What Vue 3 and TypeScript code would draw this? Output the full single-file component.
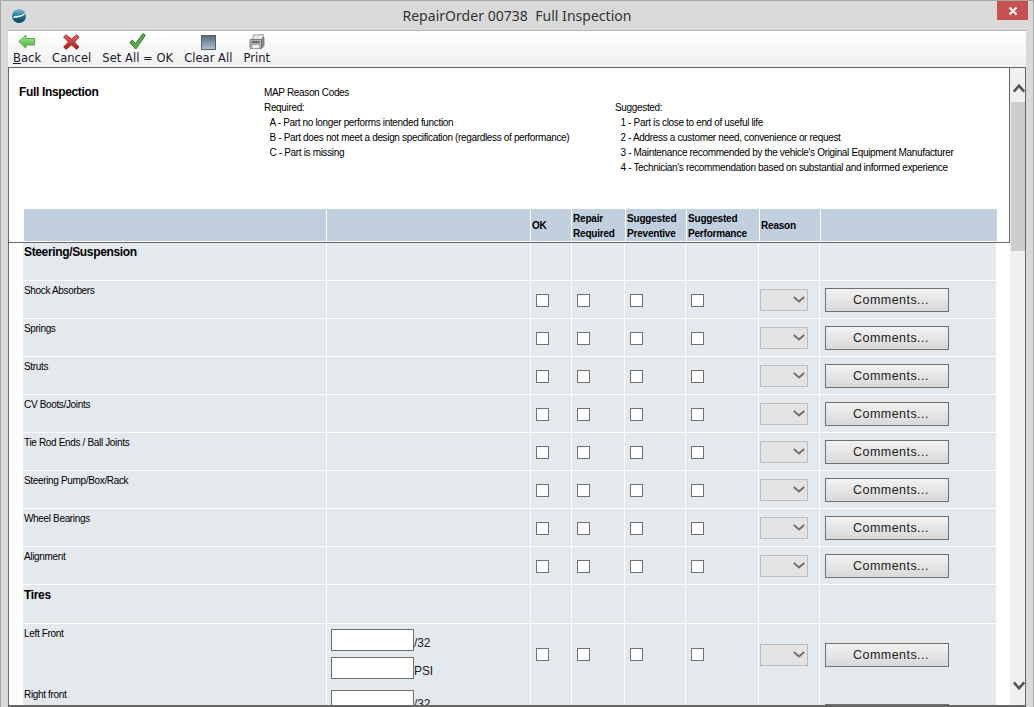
<script setup lang="ts">
interface Row { kind: 'section' | 'item' | 'tire'; label: string }

const tools = ['Cancel', 'Set All = OK', 'Clear All', 'Print']
const required = [
  'A - Part no longer performs intended function',
  'B - Part does not meet a design specification (regardless of performance)',
  'C - Part is missing',
]
const suggested = [
  '1 - Part is close to end of useful life',
  '2 - Address a customer need, convenience or request',
  "3 - Maintenance recommended by the vehicle's Original Equipment Manufacturer",
  "4 - Technician's recommendation based on substantial and informed experience",
]
const heads = [['OK'], ['Repair', 'Required'], ['Suggested', 'Preventive'], ['Suggested', 'Performance'], ['Reason']]
const rows: Row[] = [
  { kind: 'section', label: 'Steering/Suspension' },
  ...['Shock Absorbers', 'Springs', 'Struts', 'CV Boots/Joints', 'Tie Rod Ends / Ball Joints', 'Steering Pump/Box/Rack', 'Wheel Bearings', 'Alignment']
    .map((label): Row => ({ kind: 'item', label })),
  { kind: 'section', label: 'Tires' },
  { kind: 'tire', label: 'Left Front' },
  { kind: 'tire', label: 'Right front' },
]
</script>

<template>
  <div class="window">
    <header class="titlebar">
      <svg class="logo" width="16" height="16" viewBox="0 0 16 16">
        <defs>
          <linearGradient id="lg" x1="0" y1="0" x2="0" y2="1">
            <stop offset="0" stop-color="#7cc3d3" /><stop offset="0.55" stop-color="#1d6f86" /><stop offset="1" stop-color="#0d3f52" />
          </linearGradient>
        </defs>
        <circle cx="8" cy="8" r="7" fill="url(#lg)" />
        <path d="M1.5 9.5C4 6.8 9 9.2 14.6 4.8 13.5 8.2 8 10.4 1.5 9.5Z" fill="#fff" />
      </svg>
      <span class="title">RepairOrder 00738&nbsp; Full Inspection</span>
      <button class="close" aria-label="Close">
        <svg width="10" height="10" viewBox="0 0 10 10"><path d="M1.5 1.5 8.5 8.5M8.5 1.5 1.5 8.5" stroke="#fff" stroke-width="2" /></svg>
      </button>
    </header>

    <nav class="toolbar">
      <div class="tool">
        <svg width="18" height="16" viewBox="0 0 18 16">
          <defs><linearGradient id="ga" x1="0" y1="0" x2="0" y2="1"><stop offset="0" stop-color="#b4ec9c" /><stop offset="1" stop-color="#3fae3a" /></linearGradient></defs>
          <path d="M.8 7.5 8 1.2V4.5H16.6V11H8V14.2Z" fill="url(#ga)" stroke="#5aa84f" />
        </svg>
        <span class="tool-label"><u>B</u>ack</span>
      </div>
      <div v-for="(t, i) in tools" :key="t" class="tool">
        <svg v-if="i === 0" width="17" height="16" viewBox="0 0 17 16">
          <defs><linearGradient id="gx" x1="0" y1="0" x2="0" y2="1"><stop offset="0" stop-color="#e3605e" /><stop offset="1" stop-color="#a81e20" /></linearGradient></defs>
          <path d="M3 .7 8.5 5 13.6.7 16.2 3 11.5 8 16.2 13 13.6 15.4 8.5 11 3 15.4.6 13 5.4 8 .6 3Z" fill="url(#gx)" stroke="#8f2a2a" stroke-width=".8" />
        </svg>
        <svg v-else-if="i === 1" width="17" height="17" viewBox="0 0 17 17">
          <path d="M.8 9.5 3.4 7 6.4 10.6 14 .6 16.4 2.2 6.8 16Z" fill="#5cab46" stroke="#2f7a2d" />
        </svg>
        <svg v-else-if="i === 2" width="15" height="15" viewBox="0 0 15 15">
          <defs><linearGradient id="gs" x1="0" y1="0" x2="0" y2="1"><stop offset="0" stop-color="#5b6878" /><stop offset="1" stop-color="#a9c3d6" /></linearGradient></defs>
          <rect x=".5" y=".5" width="14" height="14" fill="url(#gs)" stroke="#55606c" />
        </svg>
        <svg v-else width="16" height="16" viewBox="0 0 16 16">
          <path d="M4.5 1 14.5.6 13.6 5.5H3.6Z" fill="#e6e6e6" stroke="#8a8a8a" stroke-width=".8" />
          <path d="M1 5.5H12.5V14.5H1Z" fill="#b4b4b4" stroke="#6e6e6e" stroke-width=".8" />
          <path d="M12.5 5.5 15 3V11.5L12.5 14.5Z" fill="#8a8a8a" stroke="#6e6e6e" stroke-width=".8" />
          <rect x="3" y="7.2" width="7.5" height="1.6" fill="#555" />
          <rect x="3" y="10.4" width="7.5" height="4.2" fill="#eee" stroke="#888" stroke-width=".6" />
        </svg>
        <span class="tool-label">{{ t }}</span>
      </div>
    </nav>

    <main class="content">
      <div class="page">
        <section class="fixed">
          <div class="intro">
            <h1 class="page-title">Full Inspection</h1>
            <div class="codes codes-a">
              <p>MAP Reason Codes</p>
              <p>Required:</p>
              <p v-for="r in required" :key="r" class="indent">{{ r }}</p>
            </div>
            <div class="codes codes-b">
              <p class="blank">&nbsp;</p>
              <p>Suggested:</p>
              <p v-for="s in suggested" :key="s" class="indent">{{ s }}</p>
            </div>
          </div>
          <div class="head">
            <div></div>
            <div></div>
            <div v-for="(h, i) in heads" :key="i" class="hcell">
              <span v-for="l in h" :key="l">{{ l }}</span>
            </div>
            <div></div>
          </div>
        </section>

        <section class="scroll">
          <div v-for="r in rows" :key="r.label" class="row" :class="'row-' + r.kind">
            <div class="cell-label">{{ r.label }}</div>
            <div class="cell-measure">
              <template v-if="r.kind === 'tire'">
                <label class="measure"><input type="text" /><span>/32</span></label>
                <label class="measure"><input type="text" /><span>PSI</span></label>
              </template>
            </div>
            <template v-if="r.kind !== 'section'">
              <div v-for="n in 4" :key="n" class="cell-check"><input type="checkbox" /></div>
              <div class="cell-reason">
                <div class="select">
                  <svg width="12" height="7" viewBox="0 0 12 7"><path d="M.8 1 6 5.4 11.2 1" fill="none" stroke="#707070" stroke-width="2" /></svg>
                </div>
              </div>
              <div class="cell-btn"><button class="comments">Comments...</button></div>
            </template>
            <template v-else>
              <div v-for="n in 6" :key="n"></div>
            </template>
          </div>
        </section>
      </div>

      <aside class="scrollbar">
        <div class="arrow arrow-up">
          <svg width="12" height="10" viewBox="0 0 12 10"><path d="M.8 8.5 6 2.8 11.2 8.5" fill="none" stroke="#555" stroke-width="2.6" /></svg>
        </div>
        <div class="thumb"></div>
        <div class="track"></div>
        <div class="arrow arrow-down">
          <svg width="12" height="10" viewBox="0 0 12 10"><path d="M.8 1.5 6 7.2 11.2 1.5" fill="none" stroke="#555" stroke-width="2.6" /></svg>
        </div>
      </aside>
    </main>
  </div>
</template>

<style>
html, body { margin: 0; overflow: hidden; }
</style>

<style scoped>
.window {
  width: 1034px;
  height: 707px;
  box-sizing: border-box;
  display: flex;
  flex-direction: column;
  padding: 0 7px 0 7px;
  background: #d9d9d9;
  border-top: 1px solid #a6a6a6;
  border-left: 1px solid #a6a6a6;
  border-right: 1px solid #a6a6a6;
  font-family: "Liberation Sans", Arial, sans-serif;
  color: #000;
  overflow: hidden;
}
.titlebar {
  flex: none;
  height: 29px;
  position: relative;
  margin: 0 -7px;
  display: flex;
  align-items: center;
  justify-content: center;
}
.logo { position: absolute; left: 10px; top: 7px; }
.title { font: 14px/20px "Noto Sans", "Open Sans", sans-serif; letter-spacing: .03px; color: #333; margin-top: 0; }
.close {
  position: absolute;
  right: 5px;
  top: 0;
  width: 31px;
  height: 19px;
  border: 0;
  padding: 0;
  background: #c75050;
  display: flex;
  align-items: center;
  justify-content: center;
}
.toolbar {
  flex: none;
  height: 37px;
  box-sizing: border-box;
  display: flex;
  gap: 11px;
  padding: 2px 0 0 5px;
  background: linear-gradient(#fff, #f0f0f0);
  border-top: 1px solid #b5b5b5;
}
.tool {
  display: flex;
  flex-direction: column;
  align-items: center;
  height: 33px;
  justify-content: flex-end;
}
.tool svg { flex: none; }
.tool-label { font: 11.5px/16px "DejaVu Sans", Verdana, sans-serif; letter-spacing: .04px; color: #1a1a2a; white-space: nowrap; }
.content {
  flex: 1;
  min-height: 0;
  display: flex;
  background: #fff;
  border-top: 1px solid #666;
  border-left: 1px solid #666;
  border-right: 1px solid #666;
  border-bottom: 2px solid #666;
  box-sizing: border-box;
}
.page { flex: 1; min-width: 0; display: flex; flex-direction: column; overflow: hidden; }
.fixed {
  flex: none;
  height: 175px;
  box-sizing: border-box;
  border-bottom: 1px solid #666;
  border-right: 1px solid #666;
  display: flex;
  flex-direction: column;
}
.intro { display: flex; height: 141px; flex: none; box-sizing: border-box; padding: 17px 0 0 10px; }
.page-title { margin: 0; width: 245px; font-size: 12px; letter-spacing: -.35px; line-height: 14px; font-weight: 700; }
.codes p { margin: 0; font-size: 10px; letter-spacing: -.34px; line-height: 15px; white-space: nowrap; }
.codes-a { width: 351px; }
.indent { padding-left: 5.5px; }
.head {
  flex: none;
  height: 32px;
  margin-left: 15px;
  display: grid;
  grid-template-columns: 302px 203px 40px 53px 60px 72px 60px 176px;
  gap: 1px;
  width: 973px;
}
.head > div { background: #c2cfdf; height: 32px; }
.hcell {
  display: flex;
  flex-direction: column;
  justify-content: center;
  box-sizing: border-box;
  padding: 1px 0 0 1px;
  font-size: 10px;
  letter-spacing: -.2px;
  line-height: 15px;
  font-weight: 700;
  white-space: nowrap;
}
.scroll { flex: 1; min-height: 0; overflow: hidden; padding: 0 0 0 14px; }
.row {
  display: grid;
  grid-template-columns: 303px 203px 40px 52px 60px 72px 60px 176px;
  gap: 1px;
  width: 973px;
  height: 37px;
  margin-bottom: 1px;
}
.row > div { background: #e4e9ee; min-width: 0; }
.row-section:nth-child(n + 2) { height: 38px; }
.row-tire { height: 60px; }
.cell-label {
  box-sizing: border-box;
  padding: 4px 0 0 1px;
  font-size: 10px;
  letter-spacing: -.34px;
  line-height: 12px;
  white-space: nowrap;
}
.row-section .cell-label { padding-top: 2px; font-size: 12px; letter-spacing: -.35px; line-height: 14px; font-weight: 700; }
.row-section:nth-child(n + 2) .cell-label { padding-top: 3px; }
.cell-measure { padding: 5px 0 0 4px; }
.measure { display: flex; align-items: flex-end; height: 22px; margin-bottom: 6px; font-size: 12px; line-height: 14px; letter-spacing: -.1px; color: #222; }
.measure input {
  width: 83px;
  height: 22px;
  box-sizing: border-box;
  margin: 0;
  border: 1px solid #707070;
  background: #fff;
  padding: 0;
}
.measure span { margin-bottom: 1px; }
.cell-check { display: flex; align-items: center; padding: 2px 0 0 5px; box-sizing: border-box; }
.row-tire .cell-check { padding-top: 0; }
.cell-check input {
  appearance: none;
  width: 13px;
  height: 13px;
  margin: 0;
  border: 1px solid #707070;
  background: #fff;
  box-sizing: border-box;
}
.cell-reason { display: flex; align-items: center; padding: 0 0 0 1px; }
.select {
  width: 48px;
  height: 22px;
  box-sizing: border-box;
  border: 1px solid #bdbdbd;
  background: #e3e3e3;
  display: flex;
  align-items: center;
  justify-content: flex-end;
  padding: 0 2px 0 0;
}
.cell-btn { display: flex; align-items: center; padding-left: 5px; }
.comments {
  width: 124px;
  height: 24px;
  box-sizing: border-box;
  margin: 0;
  padding: 0 0 0 8px;
  border: 1px solid #707070;
  background: linear-gradient(#f2f2f2, #d8d8d8);
  font: 12.5px/20px "Liberation Sans", Arial, sans-serif;
  letter-spacing: .45px;
  color: #222;
}
.scrollbar {
  flex: none;
  width: 15px;
  display: flex;
  flex-direction: column;
  align-items: flex-end;
  background: #f0f0f0;
}
.arrow { flex: none; display: flex; justify-content: center; width: 100%; padding-left: 2px; box-sizing: border-box; }
.arrow-up { height: 34px; padding-top: 15px; }
.arrow-down { height: 24px; }
.thumb { flex: none; width: 14px; height: 149px; background: #cdcdcd; }
.track { flex: 1; }
</style>
